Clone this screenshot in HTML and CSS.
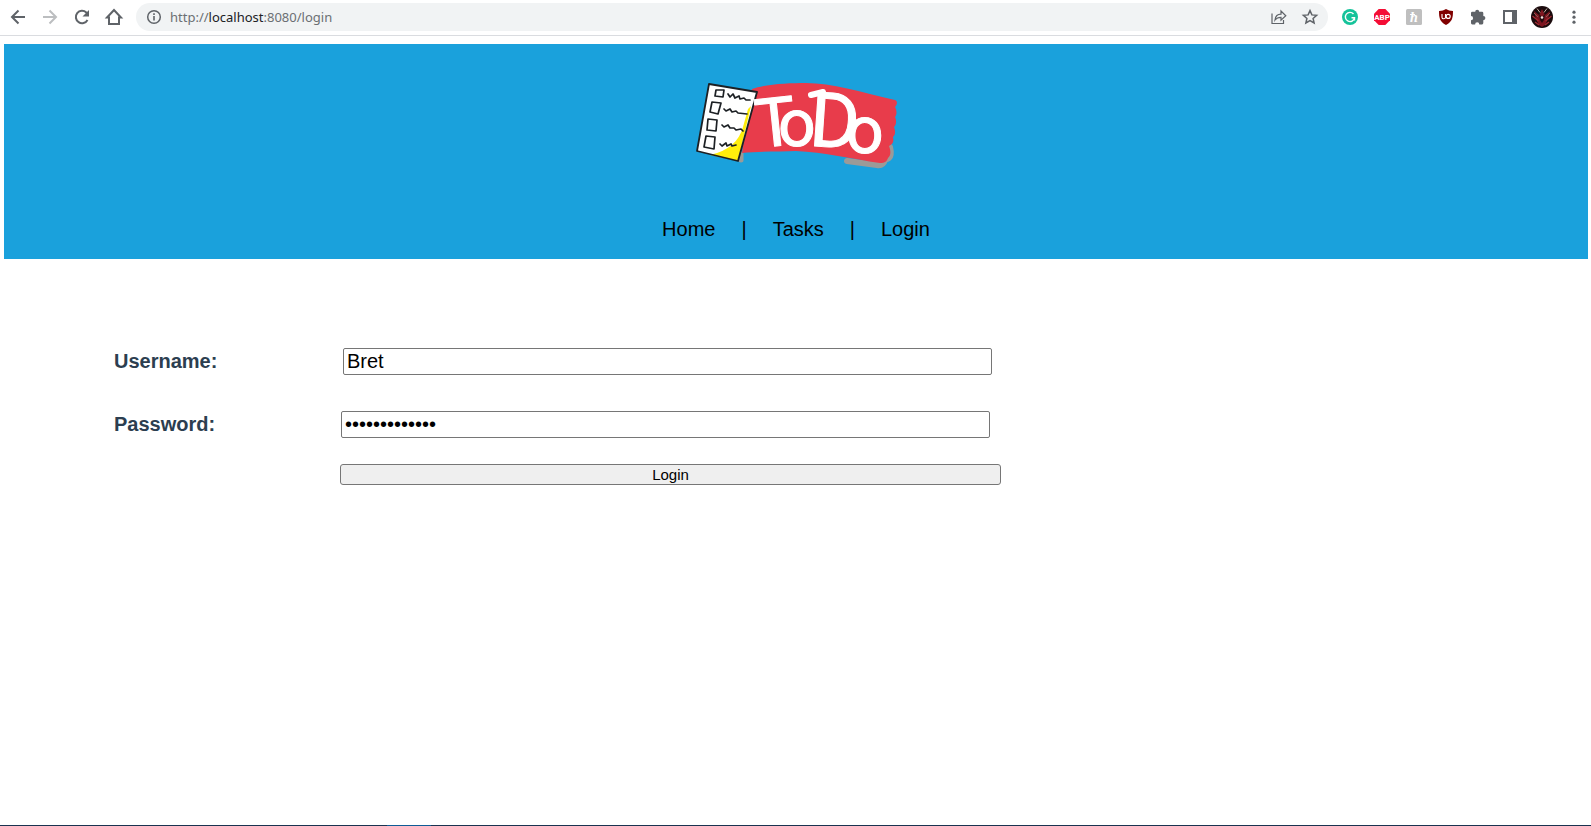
FILE: index.html
```
<!DOCTYPE html>
<html lang="en">
<head>
<meta charset="utf-8">
<title>ToDo - Login</title>
<link rel="stylesheet" href="styles.css">
</head>
<body>
<div class="toolbar">
  <button class="tool" type="button" aria-label="Back"><svg width="20" height="20" viewBox="0 0 20 20" fill="none" stroke="#5f6368" stroke-width="2"><path d="M17 10H4M10.500 3.500L4 10l6.500 6.500"/></svg></button>
  <button class="tool" type="button" aria-label="Forward"><svg width="20" height="20" viewBox="0 0 20 20" fill="none" stroke="#bcbec0" stroke-width="2"><path d="M3 10h13M9.500 3.500L16 10l-6.500 6.500"/></svg></button>
  <button class="tool" type="button" aria-label="Reload"><svg width="20" height="20" viewBox="0 0 20 20"><path d="M15.500 13A6.200 6.200 0 1 1 14.300 5.500L16 7.200" fill="none" stroke="#5f6368" stroke-width="2"/><path d="M17 3v6.500h-6.500z" fill="#5f6368"/></svg></button>
  <button class="tool" type="button" aria-label="Home"><svg width="20" height="20" viewBox="0 0 20 20" fill="none" stroke="#5f6368" stroke-width="2"><path d="M3 10.500L10 3l7 7.500h-2V17H5v-6.500z"/></svg></button>
  <div class="address">
    <svg width="16" height="16" viewBox="0 0 16 16"><circle cx="8" cy="8" r="6.300" fill="none" stroke="#5f6368" stroke-width="1.500"/><path d="M7.200 7h1.600v4.500H7.200zM7.200 4.300h1.600v1.600H7.200z" fill="#5f6368"/></svg>
    <span class="url">http://<span class="host">localhost</span>:8080/login</span>
    <button class="tool" type="button" aria-label="Share"><svg width="18" height="18" viewBox="0 0 18 18" fill="none" stroke="#5f6368" stroke-width="1.200"><path d="M3 5.500v10h11.500V12"/><path d="M6 12c.5-4 3-5.800 6-5.800V3l4.800 4.800-4.800 4.400V9.300C9.500 9.300 7.500 10 6 12z"/></svg></button>
    <button class="tool" type="button" aria-label="Bookmark"><svg width="18" height="18" viewBox="0 0 18 18" fill="none" stroke="#5f6368" stroke-width="1.500"><path d="M9 2.600l1.900 4.300 4.700.4-3.500 3.100 1 4.600L9 12.600 4.900 15l1-4.600-3.500-3.100 4.700-.4z"/></svg></button>
  </div>
  <div class="extensions">
    <button class="tool" type="button" aria-label="Writing assistant"><svg width="16" height="16" viewBox="0 0 16 16"><circle cx="8" cy="8" r="8" fill="#15c39a"/><path d="M11.500 5A4.600 4.600 0 1 0 12.500 8.800H9.500M12.500 8.800v2.700" fill="none" stroke="#fff" stroke-width="1.400"/></svg></button>
    <button class="tool" type="button" aria-label="Ad blocker"><svg width="16" height="16" viewBox="0 0 16 16"><path d="M4.700 0h6.600L16 4.700v6.600L11.300 16H4.700L0 11.300V4.700z" fill="#f40d35"/><text class="badge" x="8" y="10.900" font-size="8" fill="#fff" text-anchor="middle">ABP</text></svg></button>
    <button class="tool" type="button" aria-label="Coupons"><svg width="16" height="16" viewBox="0 0 16 16"><rect width="16" height="16" rx="1.500" fill="#bfbfbf"/><text class="script" x="8" y="12.500" font-size="14" fill="#fff" text-anchor="middle">h</text><path d="M4 5.500h5" stroke="#fff"/></svg></button>
    <button class="tool" type="button" aria-label="Content shield"><svg width="16" height="16" viewBox="0 0 16 16"><path d="M8 0c2 1.300 4 2 7 2 0 6.500-.5 10.500-7 14C1.500 12.500 1 8.500 1 2c3 0 5-.7 7-2z" fill="#800000"/><path d="M4 5v3.500q0 1.300 1.700 1.300T7.500 8.500V5" fill="none" stroke="#fff" stroke-width="1.100"/><circle cx="10.200" cy="7.400" r="2" fill="none" stroke="#fff" stroke-width="1.100"/></svg></button>
    <button class="tool" type="button" aria-label="Extensions"><svg width="18" height="18" viewBox="0 0 18 18"><path d="M6.200 3.700a2 2 0 0 1 4 0H13a1.300 1.300 0 0 1 1.300 1.300v3a2 2 0 0 1 0 4.200v2.900A1.300 1.300 0 0 1 13 16.400h-2.700a2 2 0 0 0-4.200 0H3.300A1.300 1.300 0 0 1 2 15.100v-2.800a2.100 2.100 0 0 0 0-4.200V5a1.300 1.300 0 0 1 1.300-1.300z" fill="#5f6368"/></svg></button>
    <button class="tool" type="button" aria-label="Side panel"><svg width="14" height="14" viewBox="0 0 14 14"><path d="M0 0h14v14H0zM2 2v10h7V2z" fill="#5f6368" fill-rule="evenodd"/></svg></button>
    <button class="tool" type="button" aria-label="Profile"><svg width="22" height="22" viewBox="0 0 22 22"><circle cx="11" cy="11" r="11" fill="#1b0b0d"/><path d="M3 5l5 4 3-6 3 6 5-4-2 8-3 6-3 2-3-2-3-6z" fill="#7d1620"/><path d="M1.500 10l6 5M20.500 10l-6 5M4 16l4 3M18 16l-4 3" stroke="#a52a32" stroke-width="1.300"/><path d="M6 2.500l3 4M16 2.500l-3 4" stroke="#c4b1a4" stroke-width="1"/><path d="M3 7l4 4M19 7l-4 4" stroke="#8d5a55" stroke-width="1"/><path d="M8 8l3 3 3-3-1 6-2 3-2-3z" fill="#240b0e"/><circle cx="11" cy="11.500" r="1.300" fill="#f5e3df"/></svg></button>
    <button class="tool" type="button" aria-label="Menu"><svg width="16" height="16" viewBox="0 0 16 16" fill="#5f6368"><circle cx="8" cy="3.200" r="1.600"/><circle cx="8" cy="8.200" r="1.600"/><circle cx="8" cy="13.200" r="1.600"/></svg></button>
  </div>
</div>

<header class="banner">
  <svg class="logo" width="230" height="110" viewBox="0 0 230 110" role="img" aria-label="ToDo">
    <path d="M166 91l30 4q6 1 8-5l4-2q3-3 1-11" fill="none" stroke="#9b9a98" stroke-width="6" stroke-linecap="round" stroke-linejoin="round"/>
    <path d="M60 84v6" stroke="#9b9a98" stroke-width="5" stroke-linecap="round"/>
    <path d="M71 19C85 14 108 13 125 13c26 0 54 9 89 17 3 1 2 5 0 7 2 4 2 7 0 10 2 4 1 8-1 10 2 5 1 8-1 10 1 5 0 7-4 9 2 5 2 9-1 12-1 3-3 5-8 5-28-4-56-11-84-12-16 1-37 0-54 2z" fill="#e83c4b"/>
    <path d="M28 14l48 8-19 69-41-10z" fill="#fff"/>
    <path d="M70 36l-13 55-28-6q27-6 33-28l5-18z" fill="#ffee0c"/>
    <path d="M28 14l48 8-19 69-41-10z" fill="none" stroke="#1c2024" stroke-width="1.800" stroke-linejoin="round"/>
    <g fill="none" stroke="#1c2024" stroke-width="1.700" stroke-linejoin="round" stroke-linecap="round">
      <path d="M35 20l8 0-1 7-8-1zM31 32l9 1-3 11-8-2zM27 49l9 1-1 11-9-1zM25 66l9 1-1 12-10-2z"/>
      <path d="M47 24l2 3 3-3 2 4 4-2 1 3 4-1 2 2 4 0M43 39l2 2 4-2 2 3 4-1 2 2 9 1M41 55l2 2 4-2 2 3 4 0 2 2 5-1 2 2M39 74l2 2 4-3 1 3 4-2 1 2 4-1"/>
    </g>
    <g class="wordmark" fill="#fff" stroke="#fff" stroke-linejoin="round">
      <text x="74" y="76" font-size="68" transform="rotate(-6 95 54)">T</text>
      <text x="97" y="76" font-size="66">o</text>
      <text x="129" y="77" font-size="76" transform="rotate(4 148 50)">D</text>
      <text x="165" y="83" font-size="66">o</text>
      <path d="M130 25l12-3" stroke-width="6" stroke-linecap="round"/>
    </g>
  </svg>
  <nav class="menu">
    <a href="#home">Home</a><span>|</span><a href="#tasks">Tasks</a><span>|</span><a href="#login">Login</a>
  </nav>
</header>

<main>
  <form class="login" id="login">
    <label for="username">Username:</label>
    <input class="field field-user" id="username" type="text" value="Bret">
    <label for="password">Password:</label>
    <input class="field field-pass" id="password" type="password" value="abcdefghijklm">
    <button class="submit" type="button">Login</button>
  </form>
</main>
<div class="edge"><div class="edge-active"></div></div>
</body>
</html>
```
FILE: styles.css
```
* {
  box-sizing: border-box;
}

body {
  margin: 0;
  min-height: 100vh;
  display: flex;
  flex-direction: column;
  background: #fff;
  font-family: "Liberation Sans", Arial, sans-serif;
}

.toolbar {
  display: flex;
  align-items: center;
  padding: 3px 1px 4px 2px;
  border-bottom: 1px solid #dadce0;
}

.tool {
  display: flex;
  align-items: center;
  justify-content: center;
  width: 32px;
  height: 28px;
  padding: 0;
  border: 0;
  background: none;
}

.address {
  display: flex;
  align-items: center;
  flex: 1;
  min-width: 0;
  height: 28px;
  margin: 0 6px;
  padding: 0 2px 0 10px;
  border-radius: 14px;
  background: #f1f3f4;
}

.url {
  flex: 1;
  padding-left: 8px;
  color: #6b6f73;
  font: 13px/20px "Noto Sans", "Open Sans", sans-serif;
}

.host {
  color: #202124;
}

.extensions {
  display: flex;
}

.badge {
  font-family: Roboto, sans-serif;
  font-weight: bold;
}

.script {
  font-family: "Liberation Serif", serif;
  font-style: italic;
  font-weight: bold;
}

.banner {
  display: flex;
  flex-direction: column;
  align-items: center;
  gap: 37px;
  margin: 8px 3px 0 4px;
  padding: 26px 0 18px;
  background: #1aa1dc;
}

.wordmark {
  font-family: Roboto, sans-serif;
}

.menu {
  display: flex;
  gap: 26px;
  font-size: 20px;
  line-height: 24px;
}

.menu a {
  color: #000;
  text-decoration: none;
}

main {
  flex: 1;
  padding: 89px 114px 0;
}

.login {
  display: grid;
  grid-template-columns: 226px minmax(0, 661px);
}

.login label {
  color: #2c3e50;
  font-size: 20px;
  font-weight: bold;
  line-height: 27px;
}

.field {
  width: calc(100% - 12px);
  height: 27px;
  margin-bottom: 36px;
  padding: 1px 3px;
  border: 1px solid #767676;
  border-radius: 2px;
  background: #fff;
  color: #000;
  font: 20px "Liberation Sans", Arial, sans-serif;
}

.field-user {
  margin-left: 3px;
}

.field-pass {
  margin-bottom: 26px;
  margin-left: 1px;
}

.submit {
  grid-column: 2;
  height: 21px;
  padding: 0;
  border: 1px solid #767676;
  border-radius: 3px;
  background: #efefef;
  color: #000;
  font: 15px/19px "Liberation Sans", Arial, sans-serif;
}

.edge {
  height: 1px;
  padding-left: 387px;
  background: #1a3350;
}

.edge-active {
  width: 44px;
  height: 1px;
  background: #0f5c96;
}
```
